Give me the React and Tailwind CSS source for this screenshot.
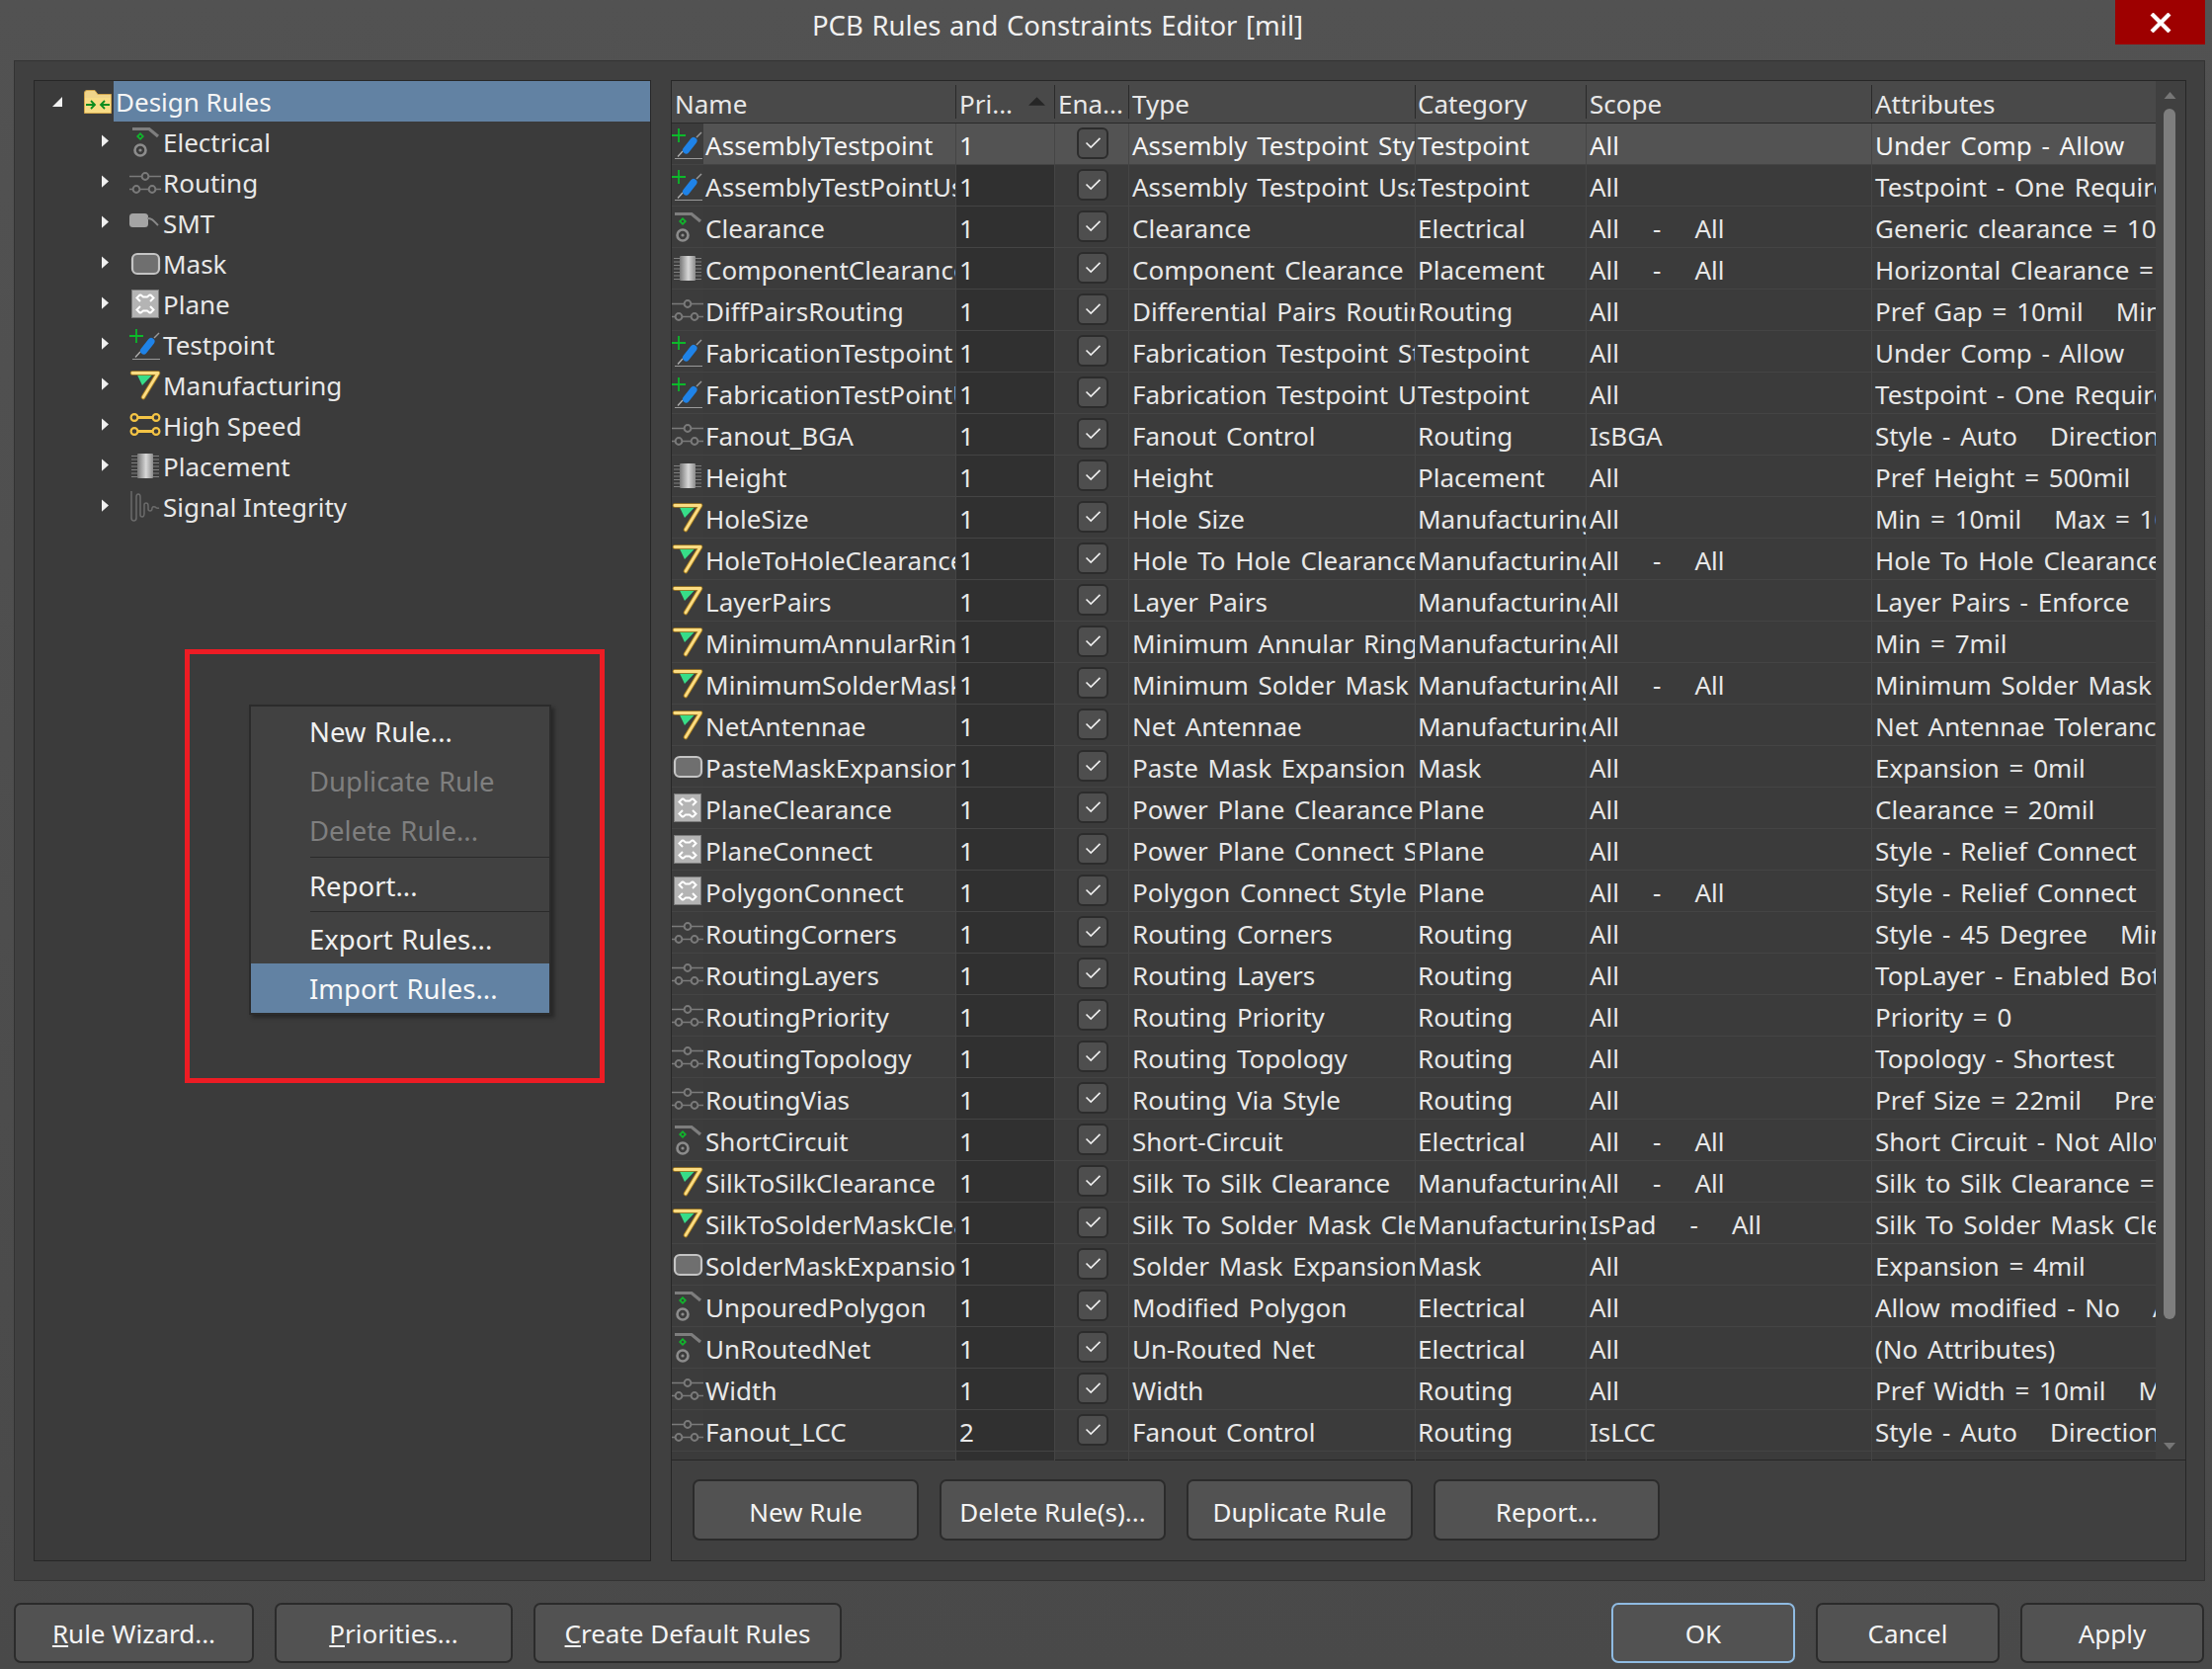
import React from "react";

const Electrical = () => (
  <svg viewBox="0 0 32 32" className="w-8 h-8 shrink-0">
    <path d="M3 2.500H20L29 10" fill="none" stroke="#7e7e7e" strokeWidth="3.200" />
    <path d="M11 6l4 4-4 4-4-4z" fill="#10b52c" />
    <path d="M11 8.500l1.500 1.500-1.500 1.500-1.500-1.500z" fill="#3b3b3b" />
    <circle cx="11" cy="24" r="5.500" fill="none" stroke="#8c8c8c" strokeWidth="2.600" />
    <circle cx="11" cy="24" r="1.600" fill="#8c8c8c" />
  </svg>
);
const Routing = () => (
  <svg viewBox="0 0 32 32" className="w-8 h-8 shrink-0">
    <g stroke="#7a7a7a" strokeWidth="1.600" fill="none">
      <path d="M0 9.500H32M0 22.500H32" />
      <circle cx="16" cy="9.500" r="3.400" fill="#3b3b3b" strokeWidth="2" />
      <circle cx="7" cy="22.500" r="3.400" fill="#3b3b3b" strokeWidth="2" />
      <circle cx="23" cy="22.500" r="3.400" fill="#3b3b3b" strokeWidth="2" />
    </g>
  </svg>
);
const Smt = () => (
  <svg viewBox="0 0 32 32" className="w-8 h-8 shrink-0">
    <rect x="0" y="6" width="19" height="14" rx="3.500" fill="#a4a4a4" />
    <path d="M18 11C23 11 24 13 29 18" fill="none" stroke="#8a8a8a" strokeWidth="2" />
  </svg>
);
const Mask = () => (
  <svg viewBox="0 0 32 32" className="w-8 h-8 shrink-0">
    <rect x="3" y="6" width="27" height="20" rx="5" fill="#6f6f6f" stroke="#c4c4c4" strokeWidth="2.200" />
  </svg>
);
const Plane = () => (
  <svg viewBox="0 0 32 32" className="w-8 h-8 shrink-0">
    <rect x="2.500" y="1.500" width="27" height="28" fill="#b4b4b4" stroke="#7c7c7c" />
    <path d="M11 6L7.500 9.500L11 13M21 6L24.500 9.500L21 13M11 25L7.500 21.500L11 18M21 25L24.500 21.500L21 18M11 6L14 8.500H18L21 6M11 25L14 22.500H18L21 25" fill="none" stroke="#fff" strokeWidth="2" />
  </svg>
);
const Testpoint = () => (
  <svg viewBox="0 0 32 32" className="w-8 h-8 shrink-0">
    <path d="M7 0V14M0 7H14" stroke="#0cb92a" strokeWidth="1.800" />
    <path d="M3 30.500H31" stroke="#9a9a9a" strokeWidth="1" />
    <path d="M6 28.500L11 23" stroke="#b5b5b5" strokeWidth="1.200" />
    <path d="M25 9L30 4" stroke="#9a9a9a" strokeWidth="1.400" />
    <path d="M14.500 22L22 12.500" stroke="#1f83e8" strokeWidth="7" strokeLinecap="round" />
  </svg>
);
const Manufacturing = () => (
  <svg viewBox="0 0 32 32" className="w-8 h-8 shrink-0">
    <path d="M8 5.500H23L13 16z" fill="#37dd88" />
    <path d="M3 3.500H29L14 28" fill="none" stroke="#a67c1e" strokeWidth="4.600" strokeLinejoin="round" strokeLinecap="round" />
    <path d="M3 3.500H29L14 28" fill="none" stroke="#fbdc82" strokeWidth="2.800" strokeLinejoin="round" strokeLinecap="round" />
  </svg>
);
const HighSpeed = () => (
  <svg viewBox="0 0 32 32" className="w-8 h-8 shrink-0">
    <g stroke="#f4c445" fill="none">
      <path d="M7 7.500H25M7 21.500H25" strokeWidth="3.200" />
      <circle cx="5" cy="7.500" r="3.400" strokeWidth="2.200" fill="#3b3b3b" />
      <circle cx="27" cy="7.500" r="3.400" strokeWidth="2.200" fill="#3b3b3b" />
      <circle cx="5" cy="21.500" r="3.400" strokeWidth="2.200" fill="#3b3b3b" />
      <circle cx="27" cy="21.500" r="3.400" strokeWidth="2.200" fill="#3b3b3b" />
    </g>
  </svg>
);
const Placement = () => (
  <svg viewBox="0 0 32 32" className="w-8 h-8 shrink-0">
    <defs>
      <linearGradient id="chip" x1="0" x2="1" y1="0" y2="0">
        <stop offset="0" stopColor="#777" />
        <stop offset="0.55" stopColor="#d8d8d8" />
        <stop offset="1" stopColor="#8c8c8c" />
      </linearGradient>
    </defs>
    <path d="M2 5.500H30M2 9H30M2 12.500H30M2 16H30M2 19.500H30M2 23H30M2 26.500H30" stroke="#808080" strokeWidth="1.100" />
    <rect x="8" y="3" width="16" height="25" rx="1" fill="url(#chip)" />
  </svg>
);
const Signal = () => (
  <svg viewBox="0 0 32 32" className="w-8 h-8 shrink-0">
    <path d="M2 0V27Q2 30 4.500 30Q7 30 7 27V6Q7 3 9 3Q11 3 11 6V24Q11 26 13 26Q15 26 15 22V14Q15 12 17 12Q19 12 19 15V18Q19 20 21 20Q23 20 23 17Q24 15 26 16Q28 18 30 17" fill="none" stroke="#6b6b6b" strokeWidth="1.500" />
  </svg>
);
const Folder = () => (
  <svg viewBox="0 0 28 24" className="w-7 h-6 shrink-0">
    <path d="M0.500 3Q0.500 0.500 3 0.500H11L14 4.500H27.500V23.500H0.500z" fill="#f0d48a" stroke="#d2a64c" />
    <rect x="1" y="8" width="26" height="15" fill="#f8dc86" />
    <path d="M2 15H11M7 11L11 15L7 19M26 15H17M21 11L17 15L21 19" fill="none" stroke="#0b8c1e" strokeWidth="1.800" />
  </svg>
);

const icons = { Electrical, Routing, Smt, Mask, Plane, Testpoint, Manufacturing, HighSpeed, Placement, Signal };

const tree = [
  ["Electrical", "Electrical"],
  ["Routing", "Routing"],
  ["SMT", "Smt"],
  ["Mask", "Mask"],
  ["Plane", "Plane"],
  ["Testpoint", "Testpoint"],
  ["Manufacturing", "Manufacturing"],
  ["High Speed", "HighSpeed"],
  ["Placement", "Placement"],
  ["Signal Integrity", "Signal"],
];

const rows = [
  ["AssemblyTestpoint", "Testpoint", "1", "Assembly Testpoint Style", "Testpoint", ["All"], ["Under Comp - Allow"]],
  ["AssemblyTestPointUsage", "Testpoint", "1", "Assembly Testpoint Usage", "Testpoint", ["All"], ["Testpoint - One Required"]],
  ["Clearance", "Electrical", "1", "Clearance", "Electrical", ["All", "-", "All"], ["Generic clearance = 10mil"]],
  ["ComponentClearance", "Placement", "1", "Component Clearance", "Placement", ["All", "-", "All"], ["Horizontal Clearance = 10mil"]],
  ["DiffPairsRouting", "Routing", "1", "Differential Pairs Routing", "Routing", ["All"], ["Pref Gap = 10mil", "Min Gap"]],
  ["FabricationTestpoint", "Testpoint", "1", "Fabrication Testpoint Style", "Testpoint", ["All"], ["Under Comp - Allow"]],
  ["FabricationTestPointUsage", "Testpoint", "1", "Fabrication Testpoint Usage", "Testpoint", ["All"], ["Testpoint - One Required"]],
  ["Fanout_BGA", "Routing", "1", "Fanout Control", "Routing", ["IsBGA"], ["Style - Auto", "Direction"]],
  ["Height", "Placement", "1", "Height", "Placement", ["All"], ["Pref Height = 500mil"]],
  ["HoleSize", "Manufacturing", "1", "Hole Size", "Manufacturing", ["All"], ["Min = 10mil", "Max = 100mil"]],
  ["HoleToHoleClearance", "Manufacturing", "1", "Hole To Hole Clearance", "Manufacturing", ["All", "-", "All"], ["Hole To Hole Clearance = 10mil"]],
  ["LayerPairs", "Manufacturing", "1", "Layer Pairs", "Manufacturing", ["All"], ["Layer Pairs - Enforce"]],
  ["MinimumAnnularRing", "Manufacturing", "1", "Minimum Annular Ring", "Manufacturing", ["All"], ["Min = 7mil"]],
  ["MinimumSolderMaskSliver", "Manufacturing", "1", "Minimum Solder Mask Sliver", "Manufacturing", ["All", "-", "All"], ["Minimum Solder Mask Sliver"]],
  ["NetAntennae", "Manufacturing", "1", "Net Antennae", "Manufacturing", ["All"], ["Net Antennae Tolerance"]],
  ["PasteMaskExpansion", "Mask", "1", "Paste Mask Expansion", "Mask", ["All"], ["Expansion = 0mil"]],
  ["PlaneClearance", "Plane", "1", "Power Plane Clearance", "Plane", ["All"], ["Clearance = 20mil"]],
  ["PlaneConnect", "Plane", "1", "Power Plane Connect Style", "Plane", ["All"], ["Style - Relief Connect"]],
  ["PolygonConnect", "Plane", "1", "Polygon Connect Style", "Plane", ["All", "-", "All"], ["Style - Relief Connect"]],
  ["RoutingCorners", "Routing", "1", "Routing Corners", "Routing", ["All"], ["Style - 45 Degree", "Min"]],
  ["RoutingLayers", "Routing", "1", "Routing Layers", "Routing", ["All"], ["TopLayer - Enabled BottomLayer"]],
  ["RoutingPriority", "Routing", "1", "Routing Priority", "Routing", ["All"], ["Priority = 0"]],
  ["RoutingTopology", "Routing", "1", "Routing Topology", "Routing", ["All"], ["Topology - Shortest"]],
  ["RoutingVias", "Routing", "1", "Routing Via Style", "Routing", ["All"], ["Pref Size = 22mil", "Pref"]],
  ["ShortCircuit", "Electrical", "1", "Short-Circuit", "Electrical", ["All", "-", "All"], ["Short Circuit - Not Allowed"]],
  ["SilkToSilkClearance", "Manufacturing", "1", "Silk To Silk Clearance", "Manufacturing", ["All", "-", "All"], ["Silk to Silk Clearance = 10mil"]],
  ["SilkToSolderMaskClearance", "Manufacturing", "1", "Silk To Solder Mask Clearance", "Manufacturing", ["IsPad", "-", "All"], ["Silk To Solder Mask Clearance"]],
  ["SolderMaskExpansion", "Mask", "1", "Solder Mask Expansion", "Mask", ["All"], ["Expansion = 4mil"]],
  ["UnpouredPolygon", "Electrical", "1", "Modified Polygon", "Electrical", ["All"], ["Allow modified - No", "Allow"]],
  ["UnRoutedNet", "Electrical", "1", "Un-Routed Net", "Electrical", ["All"], ["(No Attributes)"]],
  ["Width", "Routing", "1", "Width", "Routing", ["All"], ["Pref Width = 10mil", "Min"]],
  ["Fanout_LCC", "Routing", "2", "Fanout Control", "Routing", ["IsLCC"], ["Style - Auto", "Direction"]],
];

const COLS = "grid grid-cols-[288px_100px_75px_290px_173px_289px_287px]";
const cell = "border-r border-r-[#454545] overflow-hidden whitespace-pre flex items-center pt-[3px]";

function Check() {
  return (
    <div className="w-[32px] h-[32px] mb-[2px] ml-[2px] rounded-[6px] border-2 border-[#2c2c2c] bg-[#4e4e4e] flex items-center justify-center">
      <svg viewBox="0 0 18 14" className="w-[17px] h-[13px]">
        <path d="M1.500 7L6.500 12L16.500 2" fill="none" stroke="#f0f0f0" strokeWidth="1.700" />
      </svg>
    </div>
  );
}

function Row({ r, i }) {
  const sel = i === 0;
  const Icon = icons[r[1]];
  return (
    <div className={`${COLS} h-[42px] border-b border-b-[#444444] ${sel ? "bg-[#535353] text-[#f4f4f4]" : "text-[#e8e8e8]"}`}>
      <div className={`${cell} !pt-0`}>
        <div className="bg-[#3c3c3c] h-full flex items-center shrink-0 w-[32px]">
          <Icon />
        </div>
        <span className="pl-[2px] pt-[3px] tracking-[0.05px]">{r[0]}</span>
      </div>
      <div className={`${cell} pl-[3px] ${sel ? "" : "bg-[#303030]"}`}>{r[2]}</div>
      <div className="border-r border-r-[#454545] flex items-center justify-center">
        <Check />
      </div>
      <div className={`${cell} pl-[3px]`}>{r[3]}</div>
      <div className={`${cell} pl-[2px]`}>{r[4]}</div>
      <div className={`${cell} pl-[3px] gap-[34px]`}>
        {r[5].map((s, k) => (
          <span key={k}>{s}</span>
        ))}
      </div>
      <div className={`${cell} pl-[3px] border-r-0 gap-[33px]`}>
        {r[6].map((s, k) => (
          <span key={k}>{s}</span>
        ))}
      </div>
    </div>
  );
}

function Btn({ w, children, ok }) {
  return (
    <button className={`${w} h-full rounded-[7px] border-2 ${ok ? "border-[#8fbbe2]" : "border-[#2b2b2b]"} bg-[#525252] text-[#f4f4f4] flex items-center justify-center`}>
      <span>{children}</span>
    </button>
  );
}

function Hd({ children, last, sort, cls = "" }) {
  return (
    <div className={`relative flex items-center h-[42px] pt-[4px] ${cls}`}>
      <span>{children}</span>
      {!last && <div className="absolute right-0 top-[4px] bottom-[4px] w-[1px] bg-[#2a2a2a]" />}
      {sort && (
        <svg viewBox="0 0 16 8" className="absolute left-[73px] top-[16px] w-[17px] h-[9px]">
          <path d="M8 0L16 8H0z" fill="#262626" />
        </svg>
      )}
    </div>
  );
}

export default function App() {
  return (
    <div
      className="w-[2239px] h-[1689px] bg-gradient-to-b from-[#525252] to-[#494949] flex flex-col text-[26px] text-[#e8e8e8] overflow-hidden [word-spacing:3px]"
      style={{ fontFamily: '"Noto Sans", "Open Sans", sans-serif' }}
    >
      <div className="h-[61px] flex shrink-0 pr-[7px]">
        <div className="flex-1 flex items-center justify-center pb-[9px] text-[#f0f0f0] text-[27.500px] [word-spacing:1.500px]">PCB Rules and Constraints Editor [mil]</div>
        <div className="w-[91px] h-[45px] bg-[#9e0000] flex items-center justify-center">
          <svg viewBox="0 0 22 20" className="w-[22px] h-[20px]">
            <path d="M2 1L20 19M20 1L2 19" stroke="#fff" strokeWidth="4.200" />
          </svg>
        </div>
      </div>

      <div className="ml-[14px] w-[2218px] h-[1539px] shrink-0 border border-[#333333] bg-[#404040] flex gap-[20px] pt-[19px] pl-[19px] pb-[19px]">
        <div className="relative w-[625px] h-full border border-[#272727] bg-[#3b3b3b] [word-spacing:0px]">
          <div className="flex items-center h-[41px]">
            <svg viewBox="0 0 10 10" className="w-[10px] h-[10px] ml-[18px]"><path d="M10 0V10H0z" fill="#f2f2f2" /></svg>
            <div className="ml-[22px]"><Folder /></div>
            <div className="flex-1 h-full bg-[#6282a3] ml-[2px] flex items-center pl-[2px] pt-[2px] text-[#f5f5f5]">Design Rules</div>
          </div>
          {tree.map(([t, k]) => {
            const I = icons[k];
            return (
              <div key={t} className="flex items-center h-[41px]">
                <svg viewBox="0 0 8 14" className="w-[7px] h-[13px] ml-[68px] -mt-[3px]"><path d="M0 0L8 7L0 14z" fill="#f0f0f0" /></svg>
                <div className="ml-[21px]"><I /></div>
                <span className="ml-[2px] pt-[2px]">{t}</span>
              </div>
            );
          })}

          <div className="absolute left-[152px] top-[575px] w-[425px] h-[439px] border-[5px] border-[#ed1c24]" />
          <div className="absolute left-[217px] top-[631px] w-[306px] h-[314px] border-2 border-[#2b2b2b] bg-[#414141] shadow-[3px_3px_4px_rgba(0,0,0,0.35)] text-[#f0f0f0] text-[27.500px] [word-spacing:1.500px]">
            <div className="h-[1px]" />
            <div className="h-[50px] flex items-center pl-[59px]">New Rule...</div>
            <div className="h-[50px] flex items-center pl-[59px] text-[#7f7f7f]">Duplicate Rule</div>
            <div className="h-[50px] flex items-center pl-[59px] text-[#7f7f7f]">Delete Rule...</div>
            <div className="h-[1px]" />
            <div className="h-[1px] ml-[60px] bg-[#2a2a2a]" />
            <div className="h-[54px] flex items-center pl-[59px] pt-[3px]">Report...</div>
            <div className="h-[1px] ml-[60px] bg-[#2a2a2a]" />
            <div className="h-[52px] flex items-center pl-[59px] pt-[4px]">Export Rules...</div>
            <div className="h-[50px] flex items-center pl-[59px] pt-[2px] bg-[#6282a3] text-[#f8f8f8]">Import Rules...</div>
          </div>
        </div>

        <div className="w-[1534px] h-full border border-[#272727] bg-[#404040] flex flex-col">
          <div className="flex h-[1396px] border-b border-b-[#272727] shrink-0">
            <div className="w-[1502px] shrink-0 bg-[#3b3b3b]">
              <div className={`${COLS} h-[43px] bg-[#494949] border-b border-b-[#2a2a2a]`}>
                <Hd cls="pl-[3px]">Name</Hd>
                <Hd sort cls="pl-[3px]">Pri...</Hd>
                <Hd cls="pl-[3px]">Ena...</Hd>
                <Hd cls="pl-[3px]">Type</Hd>
                <Hd cls="pl-[2px]">Category</Hd>
                <Hd cls="pl-[3px]">Scope</Hd>
                <Hd last cls="pl-[3px]">Attributes</Hd>
              </div>
              {rows.map((r, i) => (
                <Row key={r[0]} r={r} i={i} />
              ))}
              <div className={`${COLS} h-[9px]`}>
                <div className="border-r border-r-[#454545]" />
                <div className="border-r border-r-[#454545] bg-[#303030]" />
                <div className="border-r border-r-[#454545]" />
                <div className="border-r border-r-[#454545]" />
                <div className="border-r border-r-[#454545]" />
                <div className="border-r border-r-[#454545]" />
                <div />
              </div>
            </div>
            <div className="flex-1 flex flex-col items-center bg-[#404040] pt-[11px] pb-[10px] pr-[2px]">
              <svg viewBox="0 0 12 7" className="w-[13px] h-[7px]"><path d="M6 0L12 7H0z" fill="#767676" /></svg>
              <div className="w-[12px] h-[1225px] mt-[10px] rounded-full bg-[#7e7e7e]" />
              <div className="flex-1" />
              <svg viewBox="0 0 12 7" className="w-[12px] h-[7px]"><path d="M0 0H12L6 7z" fill="#767676" /></svg>
            </div>
          </div>
          <div className="flex gap-[21px] pl-[21px] pt-[19px] h-[81px] [word-spacing:1.500px]">
            <Btn w="w-[229px] pt-[5px]">New Rule</Btn>
            <Btn w="w-[229px] pt-[5px]">Delete Rule(s)...</Btn>
            <Btn w="w-[229px] pt-[5px]">Duplicate Rule</Btn>
            <Btn w="w-[229px] pt-[5px]">Report...</Btn>
          </div>
        </div>
      </div>

      <div className="flex h-[61px] mt-[22px] ml-[14px] mr-[8px] gap-[21px] [word-spacing:1.500px]">
        <Btn w="w-[243px] pt-[2px]"><u>R</u>ule Wizard...</Btn>
        <Btn w="w-[241px] pt-[2px]"><u>P</u>riorities...</Btn>
        <Btn w="w-[312px] pt-[2px]"><u>C</u>reate Default Rules</Btn>
        <div className="flex-1" />
        <Btn ok w="w-[186px] pt-[2px]">OK</Btn>
        <Btn w="w-[186px] pt-[2px]">Cancel</Btn>
        <Btn w="w-[186px] pt-[2px]">Apply</Btn>
      </div>
    </div>
  );
}
